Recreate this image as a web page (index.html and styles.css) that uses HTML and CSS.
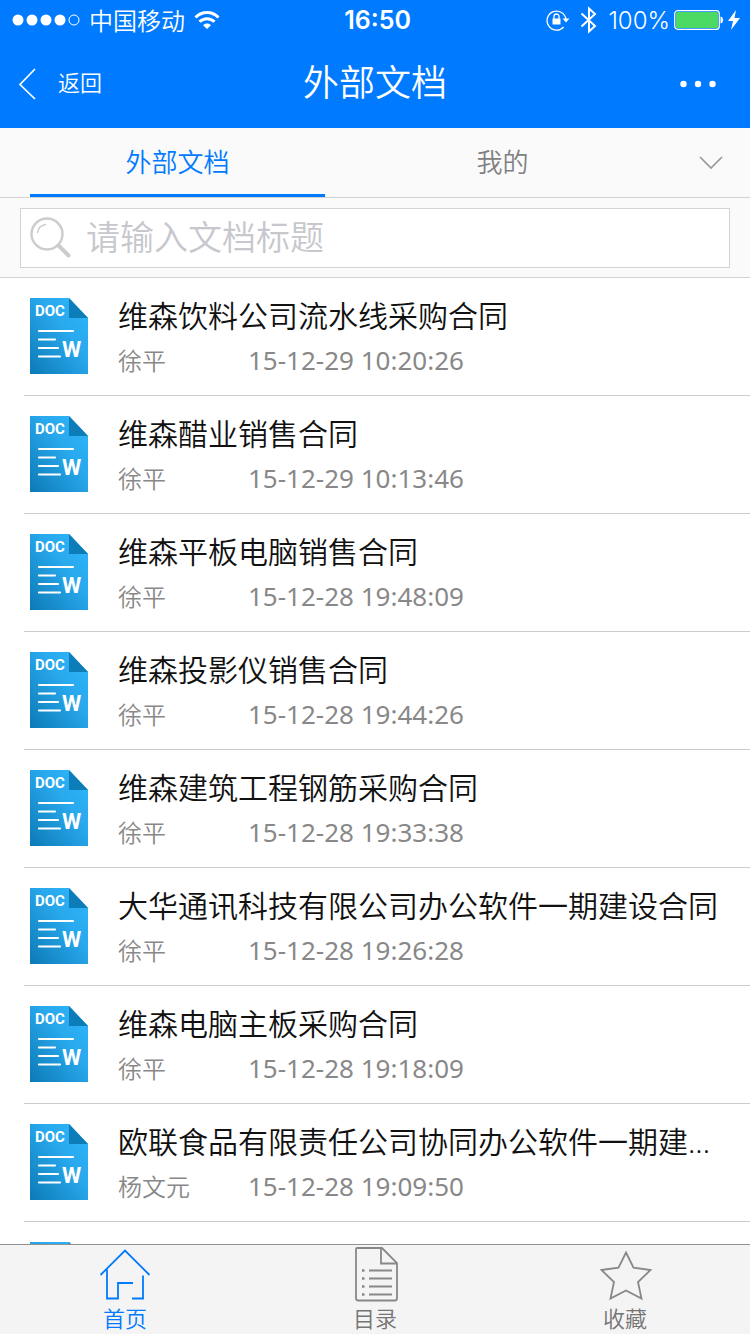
FILE: index.html
```html
<!DOCTYPE html>
<html lang="zh-CN">
<head>
<meta charset="utf-8">
<meta name="viewport" content="width=device-width, initial-scale=1">
<title>外部文档</title>
<link rel="stylesheet" href="styles.css">
</head>
<body>
<svg class="sprite" aria-hidden="true">
  <defs>
    <linearGradient id="paper" x1="1" y1="0" x2="0" y2="1">
      <stop offset="0" stop-color="#30b5fb"/>
      <stop offset="0.4" stop-color="#29a9ee"/>
      <stop offset="1" stop-color="#0c7ab5"/>
    </linearGradient>
    <symbol id="doc" viewBox="0 0 58 76">
      <path d="M0 0H39L58 20V76H0Z" fill="url(#paper)"/>
      <path d="M39 0L58 20H39Z" fill="#0d7db9"/>
      <text class="doc-type" x="5" y="18">DOC</text>
      <path d="M9 33H43M9 41.500H25M9 50H28M9 58.500H30" stroke="#fff" stroke-width="2.200" stroke-linecap="round"/>
      <text class="doc-letter" x="32" y="59">W</text>
    </symbol>
  </defs>
</svg>
<div class="app">
  <header class="header">
    <div class="status">
      <div class="status-left">
        <svg width="68" height="12" viewBox="0 0 68 12" fill="#fff"><circle cx="6" cy="6" r="5.500"/><circle cx="20" cy="6" r="5.500"/><circle cx="34" cy="6" r="5.500"/><circle cx="48" cy="6" r="5.500"/><circle cx="62" cy="6" r="5" fill="none" stroke="#fff"/></svg>
        <span class="carrier">中国移动</span>
        <svg width="26" height="20" viewBox="0 0 26 20" fill="none" stroke="#fff" stroke-width="3"><path d="M1.500 7.500C8 .8 18 .8 24.500 7.500"/><path d="M5.500 11.800C9.800 7.600 16.200 7.600 20.500 11.800"/><path d="M9 15.200C11.200 13 14.800 13 17 15.200L13 19Z" fill="#fff" stroke="none"/></svg>
      </div>
      <time class="clock">16:50</time>
      <div class="status-right">
        <svg width="24" height="22" viewBox="0 0 24 22" fill="none" stroke="#fff"><path d="M17.600 18A9.500 9.500 0 1 1 20 10.500" stroke-width="1.300"/><path d="M16.500 9.500H23.500L20 13.500Z" fill="#fff" stroke="none"/><rect x="6.500" y="9.500" width="8" height="6" fill="#fff" stroke="none"/><path d="M8 10V7.500a2.500 2.500 0 0 1 5 0V10" stroke-width="1.300"/></svg>
        <svg class="bluetooth" width="18" height="28" viewBox="0 0 18 28" fill="none" stroke="#fff" stroke-width="2"><path d="M1.500 7.500L15 20L9 25.500V2.500L15 8L1.500 20.500"/></svg>
        <span class="percent">100%</span>
        <svg width="50" height="20" viewBox="0 0 50 20"><rect x=".7" y=".7" width="44.600" height="18.600" rx="3" fill="none" stroke="#fff" stroke-width="1.200"/><rect x="2" y="2" width="42" height="16" rx="1.500" fill="#4cd964"/><path d="M46.500 6.500C50 7 50 13 46.500 13.500Z" fill="#fff"/></svg>
        <svg width="12" height="20" viewBox="0 0 12 20"><path d="M8 0L0 11H5L3 20L12 8H6.500Z" fill="#fff"/></svg>
      </div>
    </div>
    <nav class="navbar">
      <button class="back" type="button"><svg width="18" height="32" viewBox="0 0 18 32"><path d="M17 1L2 16.500L17 31" fill="none" stroke="#fff" stroke-width="1.700"/></svg><span class="back-label">返回</span></button>
      <h1 class="title">外部文档</h1>
      <button class="more" type="button" aria-label="更多"><svg width="36" height="8" viewBox="0 0 36 8" fill="#fff"><circle cx="3.500" cy="4" r="3.200"/><circle cx="18" cy="4" r="3.200"/><circle cx="32.500" cy="4" r="3.200"/></svg></button>
    </nav>
  </header>

  <div class="tabs">
    <button class="tab tab-active" type="button">外部文档</button>
    <button class="tab" type="button">我的</button>
    <button class="expand" type="button" aria-label="展开"><svg width="24" height="14" viewBox="0 0 24 14"><path d="M1 1L12 12L23 1" fill="none" stroke="#999" stroke-width="1.700"/></svg></button>
  </div>

  <form class="search">
    <label class="search-box">
      <svg width="42" height="42" viewBox="0 0 42 42" fill="none" stroke="#ccc"><circle cx="17" cy="17" r="15.500" stroke-width="2.400"/><path d="M28.500 28.500L38.500 38.500" stroke-width="4" stroke-linecap="round"/><path d="M7.500 16C8 11 11.500 8 16 7.500" stroke-width="1.500"/></svg>
      <input class="search-input" type="text" placeholder="请输入文档标题" aria-label="请输入文档标题">
    </label>
  </form>

  <ul class="list">
    <li class="item"><svg class="doc"><use href="#doc"/></svg><div class="info"><h2 class="name">维森饮料公司流水线采购合同</h2><p class="meta"><span class="author">徐平</span><time>15-12-29 10:20:26</time></p></div></li>
    <li class="item"><svg class="doc"><use href="#doc"/></svg><div class="info"><h2 class="name">维森醋业销售合同</h2><p class="meta"><span class="author">徐平</span><time>15-12-29 10:13:46</time></p></div></li>
    <li class="item"><svg class="doc"><use href="#doc"/></svg><div class="info"><h2 class="name">维森平板电脑销售合同</h2><p class="meta"><span class="author">徐平</span><time>15-12-28 19:48:09</time></p></div></li>
    <li class="item"><svg class="doc"><use href="#doc"/></svg><div class="info"><h2 class="name">维森投影仪销售合同</h2><p class="meta"><span class="author">徐平</span><time>15-12-28 19:44:26</time></p></div></li>
    <li class="item"><svg class="doc"><use href="#doc"/></svg><div class="info"><h2 class="name">维森建筑工程钢筋采购合同</h2><p class="meta"><span class="author">徐平</span><time>15-12-28 19:33:38</time></p></div></li>
    <li class="item"><svg class="doc"><use href="#doc"/></svg><div class="info"><h2 class="name">大华通讯科技有限公司办公软件一期建设合同</h2><p class="meta"><span class="author">徐平</span><time>15-12-28 19:26:28</time></p></div></li>
    <li class="item"><svg class="doc"><use href="#doc"/></svg><div class="info"><h2 class="name">维森电脑主板采购合同</h2><p class="meta"><span class="author">徐平</span><time>15-12-28 19:18:09</time></p></div></li>
    <li class="item"><svg class="doc"><use href="#doc"/></svg><div class="info"><h2 class="name">欧联食品有限责任公司协同办公软件一期建...</h2><p class="meta"><span class="author">杨文元</span><time>15-12-28 19:09:50</time></p></div></li>
    <li class="item"><svg class="doc"><use href="#doc"/></svg></li>
  </ul>

  <nav class="tabbar">
    <a class="tabbar-item tabbar-active" href="#home"><svg width="52" height="56" viewBox="0 0 52 56" fill="none" stroke="currentColor" stroke-width="1.800"><path d="M1.500 29L26 4.500L50.500 29M8 23.500V52.500H19V37H34M33 52.500H44V29.500"/></svg>首页</a>
    <a class="tabbar-item" href="#catalog"><svg width="52" height="56" viewBox="0 0 52 56" fill="none" stroke="#888" stroke-width="1.800"><path d="M8 2H33L48 17V52Q48 54.500 46 54.500H9Q7 54.500 7 52V3Q7 2 8 2ZM32 2V17.500H48"/><path d="M20 24.500H43M20 32.500H43M20 40.500H43M20 48.500H43"/><path d="M13 24.500H15.500M13 32.500H15.500M13 40.500H15.500M13 48.500H15.500" stroke-width="2.500"/></svg>目录</a>
    <a class="tabbar-item" href="#favorites"><svg width="54" height="56" viewBox="0 0 54 56" fill="none" stroke="#888" stroke-width="1.800"><path d="M28 6.500L35.500 21.700L52.500 24L40 36L43.500 52.500L28 44.500L12.500 52.500L16 36L3.500 24L20.500 21.700Z"/></svg>收藏</a>
  </nav>
</div>
</body>
</html>
```
FILE: styles.css
```css
* { box-sizing: border-box; }

body {
  margin: 0;
  background: #fff;
  color: #111;
  font-family: "Noto Sans CJK SC", sans-serif;
  font-weight: 350;
}

button {
  border: 0;
  padding: 0;
  background: none;
  color: inherit;
  font: inherit;
}

h1, h2, p, ul { margin: 0; padding: 0; }
h1, h2 { font-weight: 350; }
svg { display: block; flex: none; }

.sprite { position: absolute; width: 0; height: 0; }

.app {
  display: flex;
  flex-direction: column;
  height: 100vh;
}

.header { background: #007aff; color: #fff; }

.status {
  display: grid;
  grid-template-columns: 1fr auto 1fr;
  align-items: center;
  height: 40px;
  padding: 0 10px 0 12px;
  font-size: 24px;
}

.status-left, .status-right { display: flex; align-items: center; }
.status-left { gap: 9px; }
.status-right { justify-content: flex-end; gap: 4px; }
.carrier { line-height: 40px; }
.clock { padding-left: 3px; font-family: Inter, sans-serif; font-size: 25px; font-weight: 600; }
.percent { font-family: Inter, sans-serif; font-weight: 300; }
.bluetooth { margin: 0 6px; }

.navbar {
  display: grid;
  grid-template-columns: 1fr auto 1fr;
  align-items: center;
  height: 88px;
  padding: 0 34px 0 18px;
}

.back {
  display: flex;
  align-items: center;
  gap: 22px;
  margin-right: -16px;
  font-size: 22px;
  line-height: 32px;
}

.back-label { padding-bottom: 6px; }
.title { padding: 0 0 8px 16px; font-size: 36px; line-height: 48px; }
.more { justify-self: end; }

.tabs {
  display: grid;
  grid-template-columns: 1fr 1fr 70px;
  gap: 30px;
  height: 70px;
  padding-left: 30px;
  border-bottom: 1px solid #d3d3d6;
  background: #fafafa;
}

.tab {
  border-bottom: 3px solid transparent;
  color: #808080;
  font-size: 26px;
  line-height: 36px;
}

.tab-active { border-color: #007aff; color: #007aff; }
.expand { display: flex; align-items: center; justify-content: center; padding-right: 8px; }

.search {
  padding: 10px 20px 9px;
  border-bottom: 1px solid #d3d3d6;
  background: #fafafa;
}

.search-box {
  display: flex;
  align-items: center;
  gap: 14px;
  height: 60px;
  padding: 0 9px;
  border: 1px solid #d3d3d6;
  background: #fff;
}

.search-input {
  flex: 1;
  min-width: 0;
  padding: 0 0 6px;
  border: 0;
  outline: 0;
  background: none;
  font: inherit;
  font-size: 34px;
}

.search-input::placeholder { color: #c7c7cd; }

.list {
  flex: 1;
  min-height: 0;
  overflow: hidden;
  list-style: none;
}

.item {
  display: flex;
  gap: 30px;
  height: 118px;
  margin-left: 24px;
  padding: 20px 24px 0 6px;
  border-bottom: 1px solid #ccc;
}

.doc { width: 58px; height: 76px; }

.doc-type, .doc-letter {
  fill: #fff;
  font-family: Roboto, sans-serif;
  font-weight: 700;
}

.doc-type { font-size: 15px; }
.doc-letter { font-size: 22px; }

.info { flex: 1; min-width: 0; }

.name {
  font-family: "Noto Sans", "Noto Sans CJK SC", sans-serif;
  font-size: 30px;
  line-height: 36px;
  white-space: nowrap;
}

.meta {
  display: flex;
  align-items: center;
  color: #888;
  font-size: 24px;
  line-height: 52px;
}

.author { width: 130px; }
.meta time { font-family: "Noto Sans", sans-serif; font-size: 26px; font-weight: 400; }

.tabbar {
  display: grid;
  grid-template-columns: 1fr 1fr 1fr;
  height: 90px;
  border-top: 1px solid #929292;
  background: #f4f4f4;
}

.tabbar-item {
  display: flex;
  flex-direction: column;
  align-items: center;
  padding-top: 1px;
  color: #757575;
  font-size: 22px;
  line-height: 30px;
  text-decoration: none;
}

.tabbar-active { color: #007aff; }
```
